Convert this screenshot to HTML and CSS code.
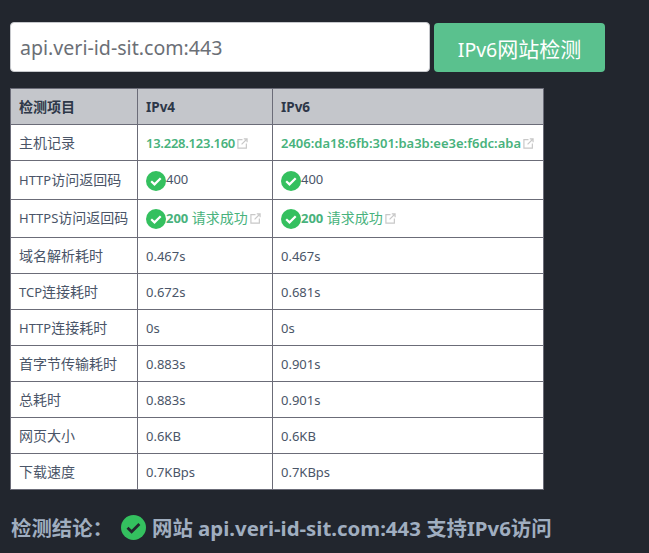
FILE: index.html
```html
<!DOCTYPE html>
<html lang="zh-CN">

<head>
    <meta charset="UTF-8" />
    <title>IPv6网站检测</title>
    <link rel="stylesheet" href="styles.css">
</head>
<body>
    <div class="search-row">
        <div class="url-input">api.veri-id-sit.com:443</div>
        <button class="check-button">IPv6<span class="zh-big">网站检测</span></button>
    </div>

    <table class="result-table">
        <colgroup>
            <col class="col-name">
            <col class="col-v4">
            <col class="col-v6">
        </colgroup>
        <thead>
            <tr>
                <th><span class="zh">检测项目</span></th>
                <th>IPv4</th>
                <th>IPv6</th>
            </tr>
        </thead>
        <tbody>
            <tr>
                <td><span class="zh">主机记录</span></td>
                <td><a class="host-link host-ip">13.228.123.160<svg class="ext-icon" viewBox="0 0 12 12" fill="none" stroke="currentColor" stroke-width="1.3"><path d="M6 1.8H1v9.2h9.2V6"></path><path d="M5 7l5.6-5.6M7.4 1h3.6v3.6"></path></svg></a></td>
                <td><a class="host-link">2406:da18:6fb:301:ba3b:ee3e:f6dc:aba<svg class="ext-icon" viewBox="0 0 12 12" fill="none" stroke="currentColor" stroke-width="1.3"><path d="M6 1.8H1v9.2h9.2V6"></path><path d="M5 7l5.6-5.6M7.4 1h3.6v3.6"></path></svg></a></td>
            </tr>
            <tr class="status-row">
                <td>HTTP<span class="zh">访问返回码</span></td>
                <td><div class="status"><svg class="check-icon" viewBox="0 0 20 20"><circle cx="10" cy="10" r="10" fill="#34c05f"></circle><path d="M5.2 10.2l3.3 3.2 6.2-6.2" fill="none" stroke="#fff" stroke-width="2.2"></path></svg><span class="code-text">400</span></div></td>
                <td><div class="status"><svg class="check-icon" viewBox="0 0 20 20"><circle cx="10" cy="10" r="10" fill="#34c05f"></circle><path d="M5.2 10.2l3.3 3.2 6.2-6.2" fill="none" stroke="#fff" stroke-width="2.2"></path></svg><span class="code-text">400</span></div></td>
            </tr>
            <tr class="status-row">
                <td>HTTPS<span class="zh">访问返回码</span></td>
                <td><div class="status"><svg class="check-icon" viewBox="0 0 20 20"><circle cx="10" cy="10" r="10" fill="#34c05f"></circle><path d="M5.2 10.2l3.3 3.2 6.2-6.2" fill="none" stroke="#fff" stroke-width="2.2"></path></svg><a class="host-link"><b>200</b> <span class="zh">请求成功</span><svg class="ext-icon" viewBox="0 0 12 12" fill="none" stroke="currentColor" stroke-width="1.3"><path d="M6 1.8H1v9.2h9.2V6"></path><path d="M5 7l5.6-5.6M7.4 1h3.6v3.6"></path></svg></a></div></td>
                <td><div class="status"><svg class="check-icon" viewBox="0 0 20 20"><circle cx="10" cy="10" r="10" fill="#34c05f"></circle><path d="M5.2 10.2l3.3 3.2 6.2-6.2" fill="none" stroke="#fff" stroke-width="2.2"></path></svg><a class="host-link"><b>200</b> <span class="zh">请求成功</span><svg class="ext-icon" viewBox="0 0 12 12" fill="none" stroke="currentColor" stroke-width="1.3"><path d="M6 1.8H1v9.2h9.2V6"></path><path d="M5 7l5.6-5.6M7.4 1h3.6v3.6"></path></svg></a></div></td>
            </tr>
            <tr><td><span class="zh">域名解析耗时</span></td><td>0.467s</td><td>0.467s</td></tr>
            <tr><td>TCP<span class="zh">连接耗时</span></td><td>0.672s</td><td>0.681s</td></tr>
            <tr><td>HTTP<span class="zh">连接耗时</span></td><td>0s</td><td>0s</td></tr>
            <tr><td><span class="zh">首字节传输耗时</span></td><td>0.883s</td><td>0.901s</td></tr>
            <tr><td><span class="zh">总耗时</span></td><td>0.883s</td><td>0.901s</td></tr>
            <tr><td><span class="zh">网页大小</span></td><td>0.6KB</td><td>0.6KB</td></tr>
            <tr><td><span class="zh">下载速度</span></td><td>0.7KBps</td><td>0.7KBps</td></tr>
        </tbody>
    </table>

    <div class="conclusion">
        <span class="conclusion-label">检测结论：</span>
        <svg class="result-icon" viewBox="0 0 20 20"><circle cx="10" cy="10" r="10" fill="#34c05f"></circle><path d="M5.2 10.2l3.3 3.2 6.2-6.2" fill="none" stroke="#22262e" stroke-width="2.2"></path></svg>
        <span class="conclusion-text">网站 api.veri-id-sit.com:443 支持IPv6访问</span>
    </div>
</body>
</html>
```

FILE: styles.css
```css
body {
    margin: 0;
    padding: 22px 0 0 10px;
    height: 531px;
    overflow: hidden;
    font-family: "Noto Sans", "Noto Sans CJK SC", sans-serif;
    background: #22262e;
    color: #4a5568;
}

.search-row {
    display: flex;
    align-items: flex-end;
    gap: 4px;
}

.url-input {
    box-sizing: border-box;
    width: 420px;
    height: 50px;
    padding: 0 9px;
    line-height: 50px;
    font-size: 19.6px;
    color: #6b6f76;
    background: #fff;
    border: 1px solid #c6c8cc;
    border-radius: 4px;
}

.check-button {
    width: 171px;
    height: 49px;
    padding: 0;
    font-family: inherit;
    font-size: 19.5px;
    color: #fff;
    background: #5ac18e;
    border: none;
    border-radius: 4px;
}

.zh-big {
    font-size: 21px;
}

.zh {
    font-size: 14px;
    line-height: 1;
}

.result-table {
    width: 534px;
    margin-top: 16px;
    table-layout: fixed;
    border-collapse: collapse;
    font-size: 13px;
    background: #fff;
}

.col-name {
    width: 127px;
}

.col-v4 {
    width: 135px;
}

.result-table th,
.result-table td {
    height: 35px;
    padding: 0 0 0 8px;
    text-align: left;
    white-space: nowrap;
    border: 1px solid #6b6c78;
}

.result-table th {
    font-size: 13.5px;
    font-weight: 700;
    color: #2d3748;
    background: #c4c6cb;
}

.status-row td {
    height: 37.5px;
}

.host-link {
    font-weight: 600;
    color: #48b27c;
}

.host-ip {
    letter-spacing: -0.25px;
}

.status .host-link {
    font-weight: 400;
}

.status .host-link b {
    font-weight: 700;
}

.ext-icon {
    width: 11px;
    height: 11px;
    margin-left: 2px;
    color: #c8c8c8;
    vertical-align: -1px;
}

.status {
    display: flex;
    align-items: center;
}

.check-icon {
    width: 20px;
    height: 20px;
    flex-shrink: 0;
    margin-top: 2px;
}

.code-text {
    position: relative;
    top: -1px;
}

.conclusion {
    display: flex;
    align-items: center;
    margin-top: 22px;
    padding-left: 1px;
    font-size: 20.4px;
    font-weight: 700;
    color: #a0aec0;
}

.conclusion-label {
    width: 110px;
}

.result-icon {
    width: 25px;
    height: 25px;
    margin-right: 6px;
}
```
